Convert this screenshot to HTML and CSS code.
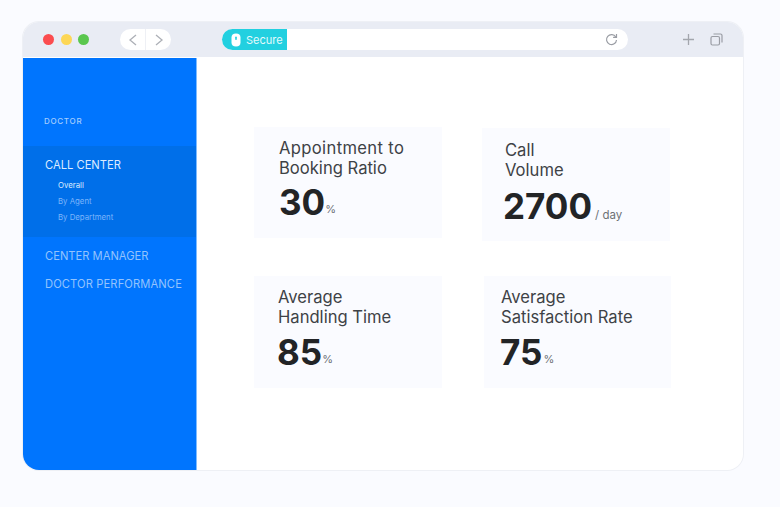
FILE: index.html
```html
<!DOCTYPE html>
<html lang="en">
<head>
    <meta charset="UTF-8">
    <meta name="viewport" content="width=device-width, initial-scale=1.0">
    <title>Call Center Dashboard</title>
    <link rel="stylesheet" href="styles.css">
</head>
<body>
    <div class="window">
        <div class="toolbar">
            <div class="lights">
                <span class="light red"></span>
                <span class="light yellow"></span>
                <span class="light green"></span>
            </div>
            <div class="nav-btns">
                <span class="nav-btn">
                    <svg width="10" height="14" viewBox="0 0 10 14"><path d="M8 2 2 7l6 5" fill="none" stroke="#adb0b7" stroke-width="1.300"/></svg>
                </span>
                <span class="nav-btn">
                    <svg width="10" height="14" viewBox="0 0 10 14"><path d="M2 2l6 5-6 5" fill="none" stroke="#adb0b7" stroke-width="1.300"/></svg>
                </span>
            </div>
            <div class="address">
                <div class="secure">
                    <svg width="10" height="14" viewBox="0 0 10 14"><path d="M5 .5C8 .5 9.500 2 9.500 4.500v5C9.500 12 8 13.500 5 13.500S.5 12 .5 9.500v-5C.5 2 2 .5 5 .5z" fill="#fff"/><rect x="4.200" y="3.500" width="1.600" height="3.500" rx=".8" fill="#22d0e0"/></svg>
                    <span>Secure</span>
                </div>
                <svg class="reload" width="13" height="13" viewBox="0 0 13 13"><path d="M10.800 4A5 5 0 1 0 11.500 7" fill="none" stroke="#9a9da4" stroke-width="1.200"/><path d="M11.500 1v3.400H8.100" fill="none" stroke="#9a9da4" stroke-width="1.200"/></svg>
            </div>
            <div class="tools">
                <svg width="13" height="13" viewBox="0 0 13 13"><path d="M6.500 1v11M1 6.500h11" stroke="#a3a6ad" stroke-width="1.300"/></svg>
                <svg width="13" height="13" viewBox="0 0 13 13"><rect x="1" y="3.500" width="8.500" height="8.500" rx="1.500" fill="none" stroke="#9a9da4" stroke-width="1.200"/><path d="M3.500 1h7a1.500 1.500 0 0 1 1.500 1.500v7" fill="none" stroke="#9a9da4" stroke-width="1.200"/></svg>
            </div>
        </div>
        <div class="main">
            <div class="sidebar">
                <div class="section-label">DOCTOR</div>
                <div class="nav-group">
                    <div class="nav-title">CALL CENTER</div>
                    <div class="sub-item current">Overall</div>
                    <div class="sub-item">By Agent</div>
                    <div class="sub-item">By Department</div>
                </div>
                <div class="nav-item">CENTER MANAGER</div>
                <div class="nav-item nav-item-wide">DOCTOR PERFORMANCE</div>
            </div>
            <div class="content">
                <div class="card">
                    <div class="card-title"><span class="title-wide">Appointment to</span><br>Booking Ratio</div>
                    <div class="metric"><span class="value">30</span><span class="unit">%</span></div>
                </div>
                <div class="card card-call">
                    <div class="card-title">Call<br>Volume</div>
                    <div class="metric"><span class="value">2700</span><span class="unit">/ day</span></div>
                </div>
                <div class="card card-handling">
                    <div class="card-title">Average<br>Handling Time</div>
                    <div class="metric"><span class="value">85</span><span class="unit">%</span></div>
                </div>
                <div class="card card-rate">
                    <div class="card-title">Average<br>Satisfaction Rate</div>
                    <div class="metric"><span class="value">75</span><span class="unit">%</span></div>
                </div>
            </div>
        </div>
    </div>
</body>
</html>
```

FILE: styles.css
```css
body {
    font-family: Inter, "Liberation Sans", sans-serif;
    background-color: #fafbff;
    margin: 0;
    padding: 22px 37px 0 23px;
    height: 507px;
    box-sizing: border-box;
    overflow: hidden;
}

.window {
    height: 448px;
    background-color: white;
    border-radius: 16px;
    box-shadow: 0 0 0 1px #eef0f5;
    overflow: hidden;
    display: flex;
    flex-direction: column;
}

.toolbar {
    height: 35px;
    flex-shrink: 0;
    background-color: #e9ecf4;
    display: flex;
    align-items: center;
    padding: 0 20px;
}

.lights {
    display: flex;
    gap: 6.500px;
    width: 77px;
}

.light {
    width: 11px;
    height: 11px;
    border-radius: 50%;
}

.red { background-color: #fb4c4f; }
.yellow { background-color: #fdd756; }
.green { background-color: #5ac74e; }

.nav-btns {
    display: flex;
    width: 51px;
    height: 21px;
    background-color: white;
    border-radius: 11px;
    margin-right: 51px;
}

.nav-btn {
    flex: 1;
    display: flex;
    align-items: center;
    justify-content: center;
}

.nav-btn:first-child {
    border-right: 1px solid #eef0f5;
}

.address {
    width: 406px;
    height: 21px;
    background-color: white;
    border-radius: 11px;
    display: flex;
    align-items: center;
    justify-content: space-between;
    padding-right: 10px;
    box-sizing: border-box;
}

.secure {
    width: 65px;
    height: 21px;
    box-sizing: border-box;
    background-color: #22d0e0;
    border-radius: 11px 0 0 11px;
    color: #e4fafc;
    font-size: 11px;
    display: flex;
    align-items: center;
    gap: 5px;
    padding-left: 9px;
}

.tools {
    margin-left: auto;
    display: flex;
    gap: 15px;
}

.main {
    flex: 1;
    display: flex;
    min-height: 0;
    padding-top: 1px;
}

.sidebar {
    width: 174px;
    flex-shrink: 0;
    background-color: #0075fe;
    border-right: 1px solid #7fbcff;
    padding-top: 57px;
    box-sizing: border-box;
}

.section-label {
    font-size: 8px;
    font-weight: 500;
    line-height: 12px;
    letter-spacing: 0.7px;
    color: #a5cdfd;
    padding-left: 21px;
    margin-bottom: 19px;
}

.nav-group {
    height: 91px;
    box-sizing: border-box;
    background-color: #006fe9;
    padding: 12px 0 0 22px;
    margin-bottom: 9px;
}

.nav-title {
    font-size: 11.200px;
    line-height: 15px;
    color: #dcebff;
    margin-bottom: 4px;
}

.sub-item {
    font-size: 7.800px;
    line-height: 16px;
    padding-left: 13px;
    color: #7db5fb;
}

.sub-item.current {
    color: #dcebff;
}

.nav-item {
    font-size: 11.200px;
    line-height: 20px;
    padding-left: 22px;
    margin-bottom: 8px;
    color: #93c3fd;
    white-space: nowrap;
}

.nav-item-wide {
    letter-spacing: 0.1px;
}

.content {
    flex: 1;
    display: grid;
    grid-template-columns: 188px 188px;
    grid-template-rows: 111px 112px;
    column-gap: 40px;
    row-gap: 38px;
    padding: 69px 0 0 57px;
    align-content: start;
}

.card {
    background-color: #fafbff;
    padding: 11px 0 0 25px;
    box-sizing: border-box;
}

.card-call {
    height: 113px;
    margin-top: 1px;
    padding: 12px 0 0 23px;
}

.card-handling {
    padding-left: 24px;
}

.card-rate {
    margin: 0 -1px 0 2px;
    padding-left: 17px;
}

.card-title {
    font-size: 16.600px;
    line-height: 20px;
    color: #3e4246;
}

.title-wide {
    letter-spacing: 0.35px;
}

.metric {
    margin-top: 2px;
    line-height: 44px;
}

.card-call .metric {
    margin-top: 4px;
}

.card-handling .metric,
.card-rate .metric {
    margin-top: 3px;
}

.value {
    font-size: 35px;
    font-weight: 700;
    color: #222426;
}

.card-call .value {
    margin-left: -2px;
}

.card-handling .value,
.card-rate .value {
    margin-left: -1px;
}

.unit {
    font-size: 11px;
    color: #6d7175;
    vertical-align: 2px;
}

.card-call .unit {
    font-size: 11.500px;
    margin-left: 3px;
    vertical-align: baseline;
}

.card-rate .unit {
    margin-left: 1px;
}
```
